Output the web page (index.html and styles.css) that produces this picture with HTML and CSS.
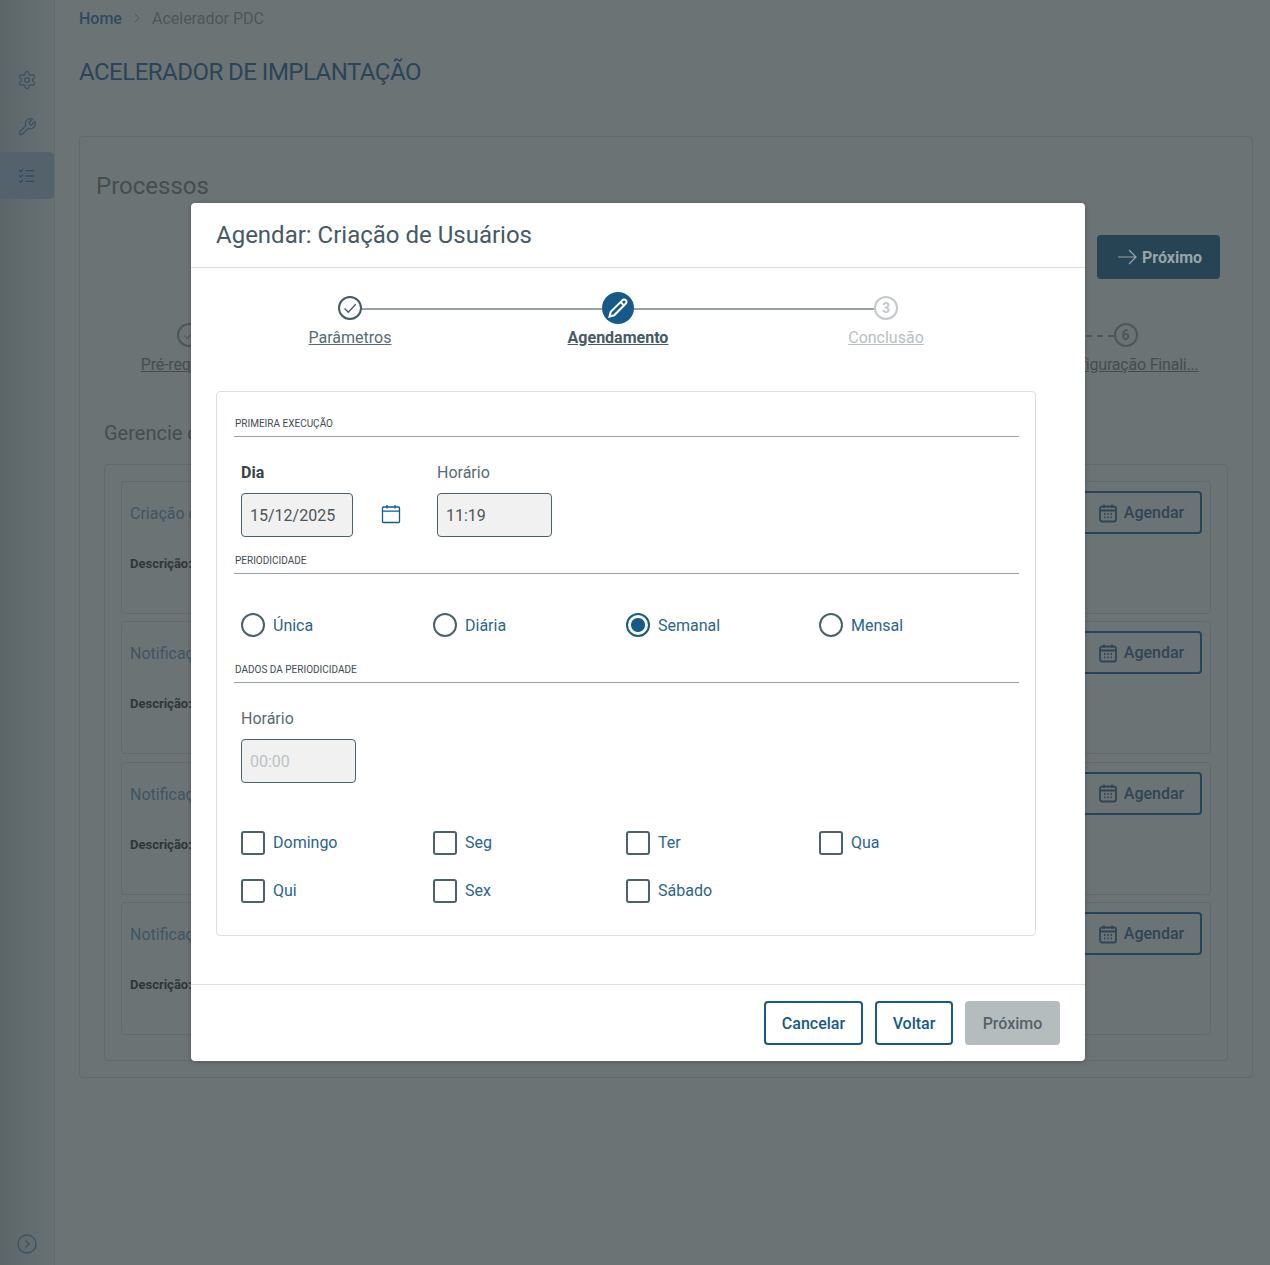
FILE: index.html
```html
<!DOCTYPE html>
<html lang="pt-BR">
<head>
  <meta charset="utf-8">
  <title>Acelerador de Implantação</title>
  <link rel="stylesheet" href="styles.css">
</head>
<body>
  <svg class="defs" width="0" height="0">
    <symbol id="cal" viewBox="0 0 20 20" fill="none" stroke="currentColor" stroke-width="1.8">
      <rect x="2" y="3.5" width="16" height="15" rx="2"/>
      <path d="M2 7.5h16M6 1.5v3.5M14 1.5v3.5"/>
      <path d="M6 11h1.4M9.3 11h1.4M12.6 11H14M6 14.4h1.4M9.3 14.4h1.4M12.6 14.4H14"/>
    </symbol>
  </svg>

  <aside class="sidebar">
    <nav class="side-nav">
      <a class="side-link">
        <svg viewBox="0 0 24 24" width="20" height="20" fill="none" stroke="currentColor" stroke-width="1.5"><path d="M12.22 2h-.44a2 2 0 0 0-2 2v.18a2 2 0 0 1-1 1.73l-.43.25a2 2 0 0 1-2 0l-.15-.08a2 2 0 0 0-2.73.73l-.22.38a2 2 0 0 0 .73 2.73l.15.1a2 2 0 0 1 1 1.72v.51a2 2 0 0 1-1 1.74l-.15.09a2 2 0 0 0-.73 2.73l.22.38a2 2 0 0 0 2.73.73l.15-.08a2 2 0 0 1 2 0l.43.25a2 2 0 0 1 1 1.73V20a2 2 0 0 0 2 2h.44a2 2 0 0 0 2-2v-.18a2 2 0 0 1 1-1.73l.43-.25a2 2 0 0 1 2 0l.15.08a2 2 0 0 0 2.73-.73l.22-.39a2 2 0 0 0-.73-2.73l-.15-.08a2 2 0 0 1-1-1.74v-.5a2 2 0 0 1 1-1.74l.15-.09a2 2 0 0 0 .73-2.73l-.22-.38a2 2 0 0 0-2.73-.73l-.15.08a2 2 0 0 1-2 0l-.43-.25a2 2 0 0 1-1-1.73V4a2 2 0 0 0-2-2z"/><circle cx="12" cy="12" r="3"/></svg>
      </a>
      <a class="side-link">
        <svg viewBox="0 0 24 24" width="20" height="20" fill="none" stroke="currentColor" stroke-width="1.5"><path d="M14.7 6.3a1 1 0 0 0 0 1.4l1.6 1.6a1 1 0 0 0 1.4 0l3.77-3.77a6 6 0 0 1-7.94 7.94l-6.91 6.91a2.12 2.12 0 0 1-3-3l6.91-6.91a6 6 0 0 1 7.94-7.94l-3.76 3.76z"/></svg>
      </a>
      <a class="side-link active">
        <svg viewBox="0 0 20 20" width="18" height="18" fill="none" stroke="currentColor" stroke-width="1.4"><path d="M8 4h10M8 10h10M8 16h10"/><path d="M1.5 3.5l1.5 1.5 2.5-2.5M1.5 9.5l1.5 1.5 2.5-2.5M1.5 15.5l1.5 1.5 2.5-2.5"/></svg>
      </a>
    </nav>
    <a class="side-toggle">
      <svg viewBox="0 0 20 20" width="20" height="20" fill="none" stroke="currentColor" stroke-width="1.3"><circle cx="10" cy="10" r="9"/><path d="M8.5 6.5l3.5 3.5-3.5 3.5"/></svg>
    </a>
  </aside>

  <main class="main">
    <div class="breadcrumb">
      <a class="crumb-home">Home</a>
      <svg viewBox="0 0 10 10" width="10" height="10" fill="none" stroke="currentColor" stroke-width="1"><path d="M3 1l4 4-4 4"/></svg>
      <span>Acelerador PDC</span>
    </div>
    <h1 class="page-title">ACELERADOR DE IMPLANTAÇÃO</h1>

    <section class="card">
      <h2 class="card-title">Processos</h2>
      <div class="next-row">
        <button class="btn-next">
          <svg viewBox="0 0 20 20" width="20" height="20" fill="none" stroke="currentColor" stroke-width="1.2"><path d="M1 10h18M12 3l7 7-7 7"/></svg>
          Próximo
        </button>
      </div>

      <div class="bg-steps">
        <div class="bg-step">
          <span class="bg-dot"><svg viewBox="0 0 20 20" width="16" height="16" fill="none" stroke="currentColor" stroke-width="1.3"><path d="M4 10.5l4 4 8-9"/></svg></span>
          <span class="bg-label">Pré-requisitos</span>
        </div>
        <div class="bg-step"></div>
        <div class="bg-step"></div>
        <div class="bg-step"></div>
        <div class="bg-step"></div>
        <div class="bg-step last">
          <span class="bg-dot">6</span>
          <span class="bg-label">Configuração Finali...</span>
        </div>
      </div>

      <h3 class="sub-title">Gerencie os</h3>
      <div class="process-box">
        <div class="process">
          <div class="process-info">
            <div class="process-name">Criação de</div>
            <div class="process-desc">Descrição:</div>
          </div>
          <button class="btn-schedule"><svg width="20" height="20"><use href="#cal"/></svg>Agendar</button>
        </div>
        <div class="process">
          <div class="process-info">
            <div class="process-name">Notificação</div>
            <div class="process-desc">Descrição:</div>
          </div>
          <button class="btn-schedule"><svg width="20" height="20"><use href="#cal"/></svg>Agendar</button>
        </div>
        <div class="process">
          <div class="process-info">
            <div class="process-name">Notificação</div>
            <div class="process-desc">Descrição:</div>
          </div>
          <button class="btn-schedule"><svg width="20" height="20"><use href="#cal"/></svg>Agendar</button>
        </div>
        <div class="process">
          <div class="process-info">
            <div class="process-name">Notificação</div>
            <div class="process-desc">Descrição:</div>
          </div>
          <button class="btn-schedule"><svg width="20" height="20"><use href="#cal"/></svg>Agendar</button>
        </div>
      </div>
    </section>
  </main>

  <div class="overlay">
    <div class="modal">
      <header class="modal-header">Agendar: Criação de Usuários</header>

      <div class="modal-body">
        <div class="stepper">
          <div class="step done">
            <span class="step-icon">
              <svg viewBox="0 0 24 24" width="24" height="24" fill="none" stroke="currentColor"><circle cx="12" cy="12" r="11" stroke-width="2"/><path d="M6.5 12.5l3.8 3.8 7.4-8" stroke-width="1.3"/></svg>
            </span>
            <span class="step-label">Parâmetros</span>
          </div>
          <div class="step current">
            <span class="step-icon">
              <svg viewBox="0 0 32 32" width="32" height="32"><circle cx="16" cy="16" r="16" fill="#155a8a"/><g transform="translate(5.8 5.8) scale(.85)" fill="none" stroke="#fff" stroke-width="2.4"><path d="M17 3a2.85 2.83 0 1 1 4 4L7.5 20.5 2 22l1.5-5.5Z"/><path d="m15 5 4 4"/></g></svg>
            </span>
            <span class="step-label">Agendamento</span>
          </div>
          <div class="step todo">
            <span class="step-icon"><span class="step-num">3</span></span>
            <span class="step-label">Conclusão</span>
          </div>
        </div>

        <div class="panel">
          <div class="section-title">Primeira execução</div>
          <div class="first-run">
            <div class="field date-field">
              <label class="field-label strong">Dia</label>
              <input class="text-input" type="text" value="15/12/2025" readonly>
            </div>
            <svg class="date-icon" width="20" height="20" viewBox="0 0 20 20" fill="none" stroke="currentColor" stroke-width="1.3"><rect x="1.5" y="3" width="17" height="15.5" rx="1"/><path d="M1.5 7.2h17M6 1v3.5M14 1v3.5"/></svg>
            <div class="field time-field">
              <label class="field-label">Horário</label>
              <input class="text-input" type="text" value="11:19" readonly>
            </div>
          </div>

          <div class="section-title tight">Periodicidade</div>
          <div class="options radios">
            <label class="option"><input type="radio" name="periodo">Única</label>
            <label class="option"><input type="radio" name="periodo">Diária</label>
            <label class="option"><input type="radio" name="periodo" checked>Semanal</label>
            <label class="option"><input type="radio" name="periodo">Mensal</label>
          </div>

          <div class="section-title tight">Dados da periodicidade</div>
          <div class="period-time">
            <div class="field period-field">
              <label class="field-label">Horário</label>
              <input class="text-input" type="text" placeholder="00:00" disabled>
            </div>
          </div>

          <div class="options days">
            <label class="option"><input type="checkbox">Domingo</label>
            <label class="option"><input type="checkbox">Seg</label>
            <label class="option"><input type="checkbox">Ter</label>
            <label class="option"><input type="checkbox">Qua</label>
            <label class="option"><input type="checkbox">Qui</label>
            <label class="option"><input type="checkbox">Sex</label>
            <label class="option"><input type="checkbox">Sábado</label>
          </div>
        </div>
      </div>

      <footer class="modal-footer">
        <button class="btn-outline cancel">Cancelar</button>
        <button class="btn-outline back">Voltar</button>
        <button class="btn-disabled" disabled>Próximo</button>
      </footer>
    </div>
  </div>
</body>
</html>
```

FILE: styles.css
```css
* {
  margin: 0;
  padding: 0;
  box-sizing: border-box;
}

body {
  display: flex;
  position: relative;
  height: 1265px;
  overflow: hidden;
  font-family: Roboto, "Liberation Sans", sans-serif;
  font-size: 16px;
  background: #6c7375;
  color: #4c5558;
}

.defs {
  position: absolute;
}

button {
  font-family: inherit;
  font-size: 16px;
  font-weight: 500;
}

/* sidebar */
.sidebar {
  width: 55px;
  flex: none;
  display: flex;
  flex-direction: column;
  justify-content: space-between;
  background: linear-gradient(90deg, #5c6669 0%, #687174 100%);
  border-right: 1px solid #616a6c;
  color: #3a5260;
}

.side-nav {
  display: flex;
  flex-direction: column;
  padding-top: 57px;
}

.side-link {
  height: 46px;
  display: flex;
  align-items: center;
  justify-content: center;
  margin-bottom: 1px;
}

.side-link.active {
  height: 47px;
  margin-top: 1px;
  background: #54636b;
  border-radius: 0 4px 4px 0;
  color: #2f4b5d;
}

.side-toggle {
  display: flex;
  justify-content: center;
  padding-bottom: 11px;
}

/* page behind the dialog */
.main {
  flex: 1;
  min-width: 0;
  padding: 0 17px 0 24px;
}

.breadcrumb {
  display: flex;
  align-items: center;
  gap: 10px;
  height: 36px;
  color: #4d5659;
}

.crumb-home {
  font-weight: 500;
  color: #2f4b5d;
}

.page-title {
  margin-top: 18px;
  font-size: 24px;
  line-height: 36px;
  font-weight: 400;
  letter-spacing: -0.52px;
  color: #2a4558;
}

.card {
  margin-top: 46px;
  height: 942px;
  padding: 0 24px 0 16px;
  border: 1px solid #626a6c;
  border-radius: 4px;
}

.card-title {
  margin-top: 35px;
  font-size: 24px;
  line-height: 28px;
  font-weight: 400;
  color: #454d50;
}

.next-row {
  display: flex;
  justify-content: flex-end;
  margin: 35px 8px 0 0;
  height: 44px;
}

.btn-next {
  width: 123px;
  height: 44px;
  display: flex;
  align-items: center;
  justify-content: center;
  gap: 5px;
  padding-left: 2px;
  border: none;
  border-radius: 4px;
  background: #264454;
  color: #9aa4a8;
  font-weight: 700;
}

.bg-steps {
  display: grid;
  grid-template-columns: repeat(6, 187.4px);
  margin: 44px 0 0 -1px;
}

.bg-step {
  display: flex;
  flex-direction: column;
  align-items: center;
  gap: 6px;
}

.bg-step.last {
  position: relative;
}

.bg-step.last::before {
  content: "";
  position: absolute;
  right: 105px;
  top: 12px;
  width: 60px;
  border-top: 2px dashed #4d5659;
}

.bg-dot {
  width: 24px;
  height: 24px;
  display: flex;
  align-items: center;
  justify-content: center;
  border: 2px solid #4d5659;
  border-radius: 50%;
  font-size: 14px;
  font-weight: 700;
  color: #4d5659;
}

.bg-label {
  line-height: 24px;
  white-space: nowrap;
  letter-spacing: -0.2px;
  text-decoration: underline;
  color: #454d50;
}

.sub-title {
  margin: 42px 0 0 8px;
  font-size: 20px;
  line-height: 28px;
  font-weight: 400;
  color: #454d50;
}

.process-box {
  display: flex;
  flex-direction: column;
  gap: 7.4px;
  height: 597px;
  margin: 17px 0 0 8px;
  width: 1124px;
  padding: 16px 16px 0;
  border: 1px solid #626a6c;
  border-radius: 4px;
}

.process {
  height: 133px;
  flex: none;
  display: flex;
  justify-content: space-between;
  padding: 9px 8px 0;
  border: 1px solid #626a6c;
  border-radius: 4px;
}

.process-name {
  margin-top: 11px;
  line-height: 24px;
  color: #3f5561;
}

.process-desc {
  margin-top: 26px;
  font-size: 13px;
  font-weight: 700;
  line-height: 24px;
  color: #2f3638;
}

.btn-schedule {
  width: 120px;
  height: 43px;
  display: flex;
  align-items: center;
  justify-content: center;
  gap: 6px;
  padding-right: 2px;
  background: none;
  border: 2px solid #274458;
  border-radius: 4px;
  color: #2f4555;
}

/* dialog */
.overlay {
  position: absolute;
  top: 203px;
  left: 191px;
}

.modal {
  width: 894px;
  height: 858px;
  display: flex;
  flex-direction: column;
  background: #fff;
  border-radius: 4px;
  box-shadow: 0 1px 4px rgba(0, 0, 0, 0.25);
}

.modal-header {
  height: 65px;
  padding-left: 25px;
  border-bottom: 1px solid #dcdfe0;
  font-size: 24px;
  line-height: 64px;
  color: #455a64;
}

.modal-body {
  flex: 1;
  padding: 24px 49px 0 25px;
}

.stepper {
  display: grid;
  grid-template-columns: repeat(3, 268px);
  height: 99px;
}

.step {
  position: relative;
  display: flex;
  flex-direction: column;
  align-items: center;
}

/* line to the next step */
.step:not(:last-child)::after {
  content: "";
  position: absolute;
  top: 16px;
  height: 2px;
  background: #98a2a5;
}

.step.done::after {
  left: 146px;
  width: 240px;
}

.step.current::after {
  left: 150px;
  width: 240px;
}

.step-icon {
  height: 32px;
  display: flex;
  align-items: center;
  color: #455a64;
}

.step-num {
  width: 24px;
  height: 24px;
  display: flex;
  align-items: center;
  justify-content: center;
  border: 2px solid #c3c9cb;
  border-radius: 50%;
  font-size: 14px;
  font-weight: 700;
  color: #c3c9cb;
}

.step-label {
  margin-top: 2px;
  line-height: 24px;
  text-decoration: underline;
  color: #566a73;
}

.step.current .step-label {
  font-weight: 700;
  color: #455a64;
}

.step.todo .step-label {
  color: #b9c0c2;
}

.panel {
  height: 545px;
  width: 820px;
  padding: 0 16px 0 17px;
  border: 1px solid #dcdfe0;
  border-radius: 4px;
}

.section-title {
  padding: 25px 0 5px 1px;
  border-bottom: 1px solid #98a2a5;
  font-size: 10px;
  line-height: 14px;
  text-transform: uppercase;
  color: #3f4b50;
}

.section-title.tight {
  padding-top: 1px;
}

.first-run {
  display: flex;
  align-items: flex-start;
  padding: 24px 0 16px 7px;
}

.field-label {
  display: block;
  line-height: 24px;
  margin-bottom: 8px;
  color: #566a73;
}

.field-label.strong {
  font-weight: 700;
  color: #3a4448;
}

.date-field {
  width: 112px;
}

.date-icon {
  flex: none;
  margin: 43px 0 0 28px;
  color: #155a8a;
}

.time-field {
  width: 115px;
  margin-left: 36px;
}

.period-field {
  width: 115px;
}

.text-input {
  width: 100%;
  height: 44px;
  padding: 0 8px;
  border: 1px solid #4d6169;
  border-radius: 4px;
  background: #f1f1f1;
  font-family: inherit;
  font-size: 16px;
  color: #4c5558;
  outline: none;
}

.text-input::placeholder {
  color: #bcc2c4;
  opacity: 1;
}

.options {
  display: grid;
  grid-template-columns: 192px 193px 193px 1fr;
  padding-left: 7px;
}

.radios {
  padding-top: 39px;
  padding-bottom: 25px;
}

.days {
  row-gap: 24px;
  padding-top: 47px;
}

.days input {
  margin-top: 2px;
}

.period-time {
  padding: 24px 0 0 7px;
}

.option {
  display: flex;
  align-items: center;
  gap: 8px;
  height: 24px;
  color: #2a648f;
}

.option input {
  appearance: none;
  width: 24px;
  height: 24px;
  flex: none;
  border: 2px solid #4d6169;
  background: #fff;
}

.option input[type="radio"] {
  border-radius: 50%;
}

.option input[type="checkbox"] {
  border-radius: 3px;
}

.option input:checked {
  border-color: #155a8a;
  background: radial-gradient(circle, #155a8a 0 6.5px, #fff 7.5px);
}

.modal-footer {
  height: 77px;
  display: flex;
  justify-content: flex-end;
  align-items: flex-start;
  gap: 12px;
  padding: 16px 25px 0 0;
  border-top: 1px solid #dcdfe0;
}

.btn-outline {
  height: 44px;
  background: #fff;
  border: 2px solid #155a8a;
  border-radius: 4px;
  color: #155a8a;
}

.cancel {
  width: 99px;
}

.back {
  width: 78px;
}

.btn-disabled {
  width: 95px;
  height: 44px;
  border: none;
  border-radius: 4px;
  background: #b5bcbe;
  color: #566268;
}
```
